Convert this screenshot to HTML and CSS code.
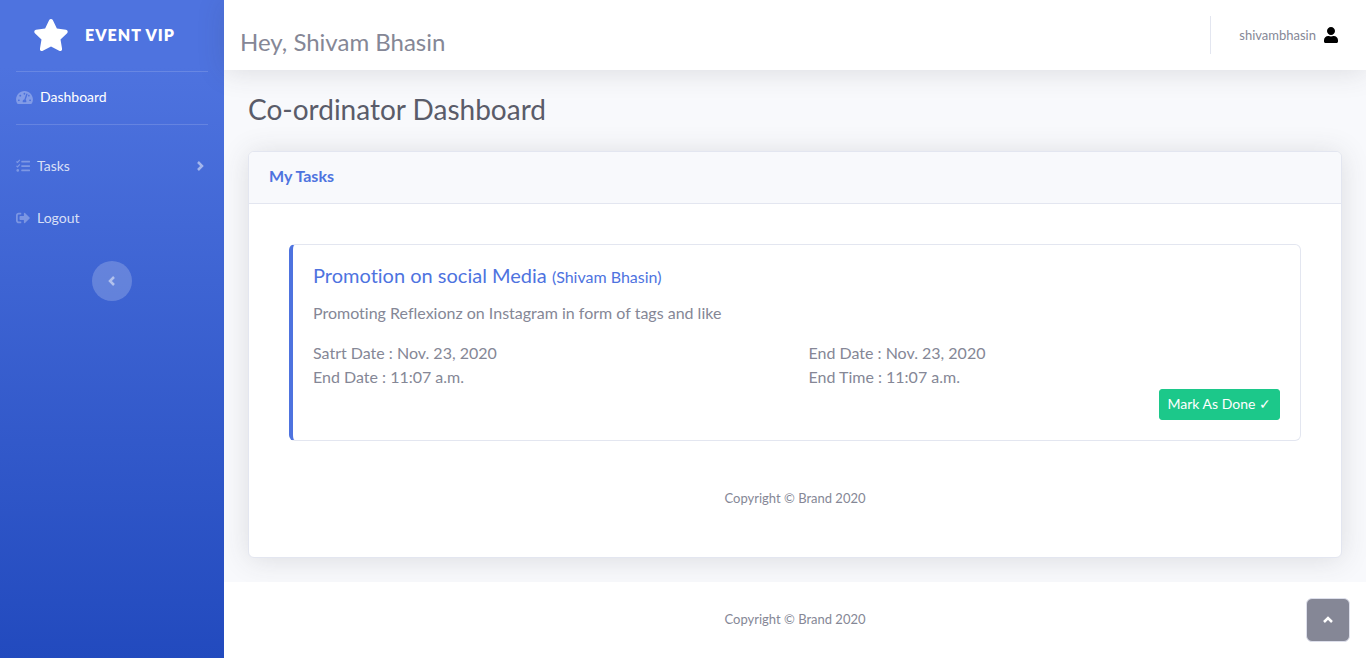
FILE: index.html
```html
<!DOCTYPE html>
<html lang="en">
<head>
<meta charset="utf-8">
<meta name="viewport" content="width=device-width, initial-scale=1">
<title>Co-ordinator Dashboard</title>
<link rel="stylesheet" href="styles.css">
</head>
<body>
<div class="wrapper">
  <nav class="sidebar" aria-label="Main">
    <a class="brand" href="#">
      <svg class="brand-icon" viewBox="0 0 576 512" aria-hidden="true"><path d="M259.3 17.8L194 150.2 47.9 171.5c-26.2 3.8-36.7 36.1-17.7 54.6l105.7 103-25 145.5c-4.5 26.3 23.2 46 46.4 33.7L288 439.6l130.7 68.7c23.2 12.2 50.9-7.4 46.4-33.7l-25-145.5 105.7-103c19-18.5 8.5-50.8-17.7-54.6L382 150.2 316.7 17.8c-11.7-23.6-45.6-23.9-57.4 0z"/></svg>
      <span>EVENT VIP</span>
    </a>
    <hr class="divider">
    <a class="nav-link active" href="#">
      <svg class="nav-icon" viewBox="0 0 576 512" aria-hidden="true"><path d="M288 32C128.94 32 0 160.94 0 320c0 52.8 14.25 102.26 39.06 144.8 5.61 9.62 16.3 15.2 27.44 15.2h443c11.14 0 21.83-5.58 27.44-15.2C561.75 422.26 576 372.8 576 320c0-159.06-128.94-288-288-288zm0 64c14.71 0 26.58 10.13 30.32 23.65-1.11 2.26-2.64 4.23-3.45 6.67l-9.22 27.67c-5.13 3.49-10.97 6.01-17.64 6.01-17.67 0-32-14.33-32-32S270.33 96 288 96zM96 384c-17.67 0-32-14.33-32-32s14.33-32 32-32 32 14.33 32 32-14.33 32-32 32zm48-160c-17.67 0-32-14.33-32-32s14.33-32 32-32 32 14.33 32 32-14.33 32-32 32zm246.77-72.41l-61.33 184C343.13 347.33 352 364.54 352 384c0 11.72-3.38 22.55-8.88 32H232.88c-5.5-9.45-8.88-20.28-8.88-32 0-33.94 26.5-61.43 59.9-63.59l61.34-184.01c4.17-12.56 17.73-19.45 30.36-15.17 12.57 4.19 19.35 17.79 15.17 30.36zm14.66 57.2l15.52-46.55c3.47-1.29 7.13-2.23 11.05-2.23 17.67 0 32 14.33 32 32s-14.33 32-32 32c-11.38-.01-20.89-6.28-26.57-15.22zM480 384c-17.67 0-32-14.33-32-32s14.33-32 32-32 32 14.33 32 32-14.33 32-32 32z"/></svg>
      <span>Dashboard</span>
    </a>
    <hr class="divider divider-spaced">
    <a class="nav-link" href="#">
      <svg class="nav-icon" viewBox="0 0 512 512" aria-hidden="true"><path d="M208 64h288q16 0 16 16v32q0 16-16 16H208q-16 0-16-16V80q0-16 16-16zm0 160h288q16 0 16 16v32q0 16-16 16H208q-16 0-16-16v-32q0-16 16-16zm0 160h288q16 0 16 16v32q0 16-16 16H208q-16 0-16-16v-32q0-16 16-16z"/><circle cx="64" cy="416" r="48"/><path class="ticks" d="M16 90l40 36 84-92M16 250l40 36 84-92"/></svg>
      <span>Tasks</span>
      <svg class="nav-caret" viewBox="0 0 8 12" aria-hidden="true"><path d="M2 2l4 4-4 4"/></svg>
    </a>
    <a class="nav-link" href="#">
      <svg class="nav-icon" viewBox="0 0 512 512" aria-hidden="true"><path d="M497 273L329 441c-15 15-41 4.5-41-17v-96H152c-13.3 0-24-10.7-24-24v-96c0-13.3 10.7-24 24-24h136V88c0-21.4 25.9-32 41-17l168 168c9.3 9.4 9.3 24.6 0 34zM192 436v-40c0-6.6-5.4-12-12-12H96c-17.7 0-32-14.3-32-32V160c0-17.7 14.3-32 32-32h84c6.6 0 12-5.4 12-12V76c0-6.6-5.4-12-12-12H96c-53 0-96 43-96 96v192c0 53 43 96 96 96h84c6.6 0 12-5.4 12-12z"/></svg>
      <span>Logout</span>
    </a>
    <button class="sidebar-toggle" type="button" aria-label="Toggle sidebar">
      <svg viewBox="0 0 8 12" aria-hidden="true"><path d="M6 2L2 6l4 4"/></svg>
    </button>
  </nav>

  <div class="content">
    <header class="topbar">
      <p class="greeting">Hey, Shivam Bhasin</p>
      <a class="user" href="#">
        <span>shivambhasin</span>
        <svg viewBox="0 0 448 512" aria-hidden="true"><path d="M224 256c70.7 0 128-57.3 128-128S294.7 0 224 0 96 57.3 96 128s57.3 128 128 128zm89.6 32h-16.7c-22.2 10.2-46.9 16-72.9 16s-50.6-5.8-72.9-16h-16.7C60.2 288 0 348.2 0 422.4V464c0 26.5 21.5 48 48 48h352c26.5 0 48-21.5 48-48v-41.6c0-74.2-60.2-134.4-134.4-134.4z"/></svg>
      </a>
    </header>

    <main class="main">
      <h1 class="page-title">Co-ordinator Dashboard</h1>
      <section class="card">
        <h2 class="card-header">My Tasks</h2>
        <div class="card-body">
          <article class="task">
            <h3 class="task-title">Promotion on social Media <small>(Shivam Bhasin)</small></h3>
            <p class="task-text">Promoting Reflexionz on Instagram in form of tags and like</p>
            <div class="task-dates">
              <div>Satrt Date : Nov. 23, 2020<br>End Date : 11:07 a.m.</div>
              <div>End Date : Nov. 23, 2020<br>End Time : 11:07 a.m.</div>
            </div>
            <button class="done" type="button">Mark As Done ✓</button>
          </article>
          <p class="copyright">Copyright © Brand 2020</p>
        </div>
      </section>
    </main>

    <footer class="footer"><p class="copyright">Copyright © Brand 2020</p></footer>
  </div>
</div>
<a class="scroll-top" href="#" aria-label="Back to top">
  <svg viewBox="0 0 12 8" aria-hidden="true"><path d="M2 6l4-4 4 4"/></svg>
</a>
</body>
</html>
```

FILE: styles.css
```css
*, *::before, *::after { box-sizing: border-box; }

body {
  margin: 0;
  background: #fff;
  color: #858796;
  font-family: Lato, "Open Sans", sans-serif;
  font-size: 16px;
  font-variant-ligatures: none;
  line-height: 24px;
}

h1, h2, h3, p { margin: 0; font-weight: 400; }
a { color: inherit; text-decoration: none; }
svg { display: block; flex: none; fill: currentColor; }
button { font-family: inherit; cursor: pointer; }

.wrapper { display: flex; min-height: 100vh; }

/* Sidebar */
.sidebar {
  flex: none;
  width: 224px;
  display: flex;
  flex-direction: column;
  background: linear-gradient(180deg, #4e73df 10%, #224abe 100%);
  color: rgba(255, 255, 255, .8);
}
.brand {
  display: flex;
  align-items: center;
  justify-content: center;
  gap: 16px;
  height: 71px;
  padding: 0 32px 2px 16px;
  color: #fff;
  font-size: 16px;
  font-weight: 800;
  letter-spacing: 1px;
}
.brand-icon { width: 36px; height: 34px; }
.divider {
  width: calc(100% - 32px);
  margin: 0 16px;
  border: 0;
  border-top: 1px solid rgba(255, 255, 255, .15);
}
.divider-spaced { margin-bottom: 16px; }
.nav-link {
  display: flex;
  align-items: center;
  gap: 7px;
  height: 52px;
  padding: 0 20px 2px 16px;
  font-size: 14px;
}
.nav-link.active { color: #fff; }
.nav-icon { width: 14px; height: 14px; color: rgba(255, 255, 255, .3); }
.active .nav-icon { width: 17px; height: 15px; }
.ticks { fill: none; stroke: currentColor; stroke-width: 44; }
.nav-caret, .sidebar-toggle svg, .scroll-top svg {
  fill: none;
  stroke: currentColor;
  stroke-width: 2.5;
}
.nav-caret { width: 8px; height: 12px; margin-left: auto; color: rgba(255, 255, 255, .5); }
.sidebar-toggle {
  display: grid;
  place-items: center;
  width: 40px;
  height: 40px;
  margin: 16px auto;
  padding: 0;
  border: 0;
  border-radius: 50%;
  background: rgba(255, 255, 255, .2);
  color: rgba(255, 255, 255, .5);
}
.sidebar-toggle svg { width: 8px; height: 12px; }

/* Content column */
.content {
  flex: 1;
  min-width: 0;
  display: flex;
  flex-direction: column;
  background: #f8f9fc;
}
.topbar {
  display: flex;
  align-items: center;
  justify-content: space-between;
  height: 70px;
  padding: 0 16px;
  background: #fff;
  box-shadow: 0 2px 28px rgba(58, 59, 69, .15);
}
.greeting { padding-top: 14px; font-size: 24px; line-height: 28px; }
.user {
  display: flex;
  align-items: center;
  gap: 8px;
  height: 38px;
  padding: 0 12px 0 28px;
  border-left: 1px solid #e3e6f0;
  font-size: 13px;
}
.user svg { width: 14px; height: 16px; color: #000; }

.main { flex: 1; padding: 24px; }
.page-title { margin-bottom: 26px; color: #5a5c69; font-size: 28px; line-height: 31px; }

.card {
  border: 1px solid #e3e6f0;
  border-radius: 6px;
  background: #fff;
  box-shadow: 0 2px 28px rgba(58, 59, 69, .15);
}
.card-header {
  padding: 12px 20px 15px;
  border-bottom: 1px solid #e3e6f0;
  border-radius: 5px 5px 0 0;
  background: #f8f9fc;
  color: #4e73df;
  font-size: 16px;
  font-weight: 700;
}
.card-body { padding: 40px; }
.task {
  display: flex;
  flex-direction: column;
  padding: 18px 20px 20px;
  border: 1px solid #e3e6f0;
  border-left: 4px solid #4e73df;
  border-radius: 6px;
}
.task-title { margin-bottom: 12px; color: #4e73df; font-size: 20px; }
.task-title small { font-size: 16px; }
.task-text { margin-bottom: 16px; }
.task-dates { display: grid; grid-template-columns: 1fr 1fr; gap: 24px; }
.done {
  align-self: flex-end;
  padding: 3px 8px 5px;
  border: 1px solid #1cc88a;
  border-radius: 3px;
  background: #1cc88a;
  color: #fff;
  font-size: 14px;
  line-height: 21px;
}
.copyright { text-align: center; font-size: 13px; line-height: 13px; }
.card-body .copyright { padding: 51px 0 12px; }
.footer { padding: 31px 0 32px; background: #fff; }

.scroll-top {
  position: fixed;
  right: 16px;
  bottom: 16px;
  display: grid;
  place-items: center;
  width: 44px;
  height: 44px;
  border: 1px solid #dddfeb;
  border-radius: 6px;
  background: #858796;
  color: #fff;
}
.scroll-top svg { width: 12px; height: 8px; }
```
